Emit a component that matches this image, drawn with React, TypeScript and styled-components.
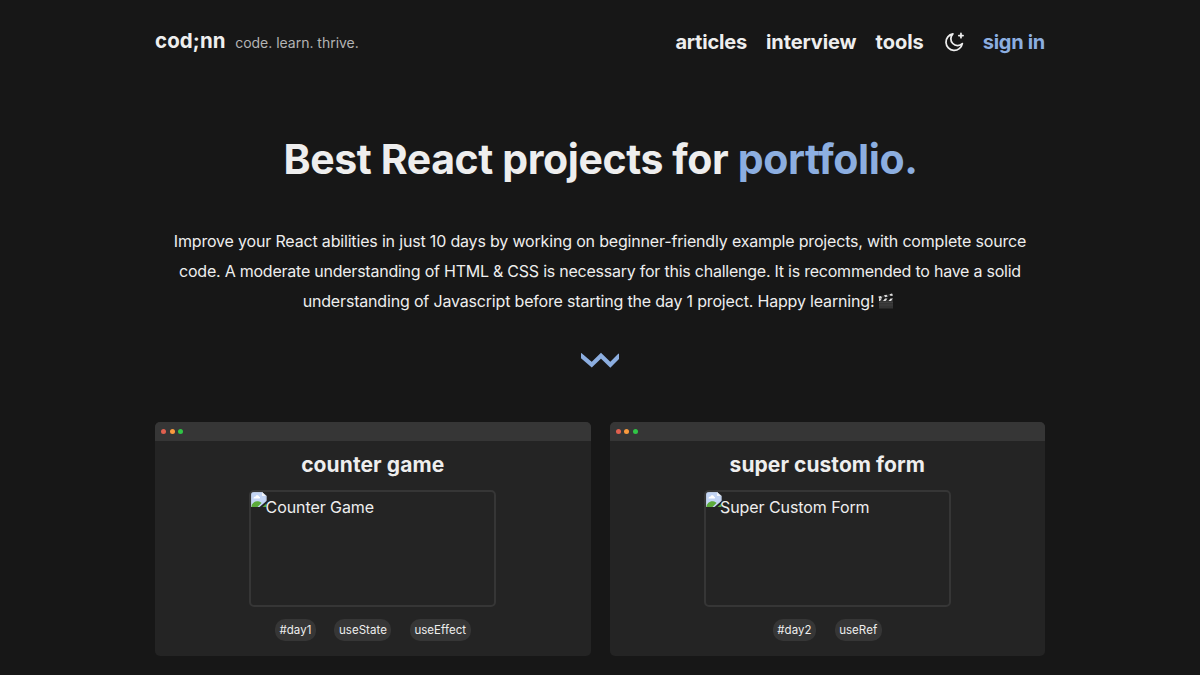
import styled, { createGlobalStyle } from "styled-components";

const GlobalStyle = createGlobalStyle`
  * {
    box-sizing: border-box;
  }
  body {
    margin: 0;
    background-color: #171717;
    color: #eeeeee;
    font-family: Inter, "Liberation Sans", sans-serif;
    font-variant-ligatures: none;
    height: 675px;
    overflow: hidden;
  }
`;

const Page = styled.div`
  width: 890px;
  margin: 0 auto;
`;

const Header = styled.header`
  display: flex;
  justify-content: space-between;
  align-items: center;
  height: 84px;
`;

const Brand = styled.div`
  display: flex;
  align-items: baseline;
  gap: 9.5px;
  padding-bottom: 2px;
`;

const Logo = styled.a`
  font-size: 20.5px;
  font-weight: 700;
  line-height: 26px;
  letter-spacing: 0.1px;
`;

const Slogan = styled.span`
  font-size: 14px;
  line-height: 20px;
  letter-spacing: -0.02px;
  color: #b4b4b4;
`;

const Nav = styled.nav`
  display: flex;
  align-items: center;
  gap: 19px;
`;

const NavLink = styled.a<{ $accent?: boolean; $spacing: number }>`
  font-size: 20px;
  font-weight: 700;
  line-height: 26px;
  letter-spacing: ${({ $spacing }) => $spacing}px;
  color: ${({ $accent }) => ($accent ? "#8caee0" : "#eeeeee")};
  white-space: nowrap;
`;

const ThemeIcon = styled.svg`
  display: block;
  width: 22px;
  height: 22px;
  margin: 0 -1px 0 0;
`;

const Title = styled.h1`
  margin: 47px 0 0;
  padding-left: 1px;
  font-size: 41px;
  font-weight: 700;
  line-height: 56px;
  letter-spacing: -0.4px;
  text-align: center;
  white-space: nowrap;

  span {
    color: #8caee0;
  }
`;

const Description = styled.div`
  margin-top: 39px;
  display: flex;
  flex-direction: column;
  align-items: center;
`;

const Line = styled.span<{ $spacing: number }>`
  font-size: 16px;
  line-height: 30px;
  letter-spacing: ${({ $spacing }) => $spacing}px;
  white-space: nowrap;
`;

const Clapper = styled.svg`
  width: 16px;
  height: 16px;
  margin: 0 3px 0 4px;
  vertical-align: -2px;
`;

const Wave = styled.svg`
  display: block;
  width: 38px;
  height: 16px;
  margin: 36px auto 0;
`;

const Cards = styled.main`
  display: grid;
  grid-template-columns: 1fr 1fr;
  gap: 19px;
  margin-top: 54px;
`;

const Card = styled.article`
  height: 234px;
  border-radius: 5px;
  overflow: hidden;
  background-color: #242424;
`;

const CardBar = styled.div`
  display: flex;
  align-items: center;
  gap: 3.5px;
  height: 19px;
  padding-left: 6px;
  background-color: #363636;
`;

const Dot = styled.i<{ $color: string }>`
  width: 5px;
  height: 5px;
  border-radius: 50%;
  background-color: ${({ $color }) => $color};
`;

const CardTitle = styled.h2<{ $spacing: number }>`
  margin: 10px 0 0;
  font-size: 21px;
  font-weight: 700;
  line-height: 28px;
  letter-spacing: ${({ $spacing }) => $spacing}px;
  text-align: center;
`;

const Preview = styled.div`
  display: flex;
  width: 247.4px;
  height: 117px;
  margin: 11px auto 0;
  border: 2px solid #363636;
  border-radius: 5px;
  overflow: hidden;
`;

const BrokenIcon = styled.svg`
  flex-shrink: 0;
  width: 16px;
  height: 16px;
  margin-right: -1.5px;
`;

const PreviewAlt = styled.span`
  font-size: 16px;
  line-height: 31px;
  letter-spacing: -0.08px;
`;

const Tags = styled.div`
  display: flex;
  justify-content: center;
  gap: 18.5px;
  margin-top: 12px;
`;

const Tag = styled.span`
  height: 22px;
  padding: 0 4.5px;
  border-radius: 10px;
  background-color: #363636;
  font-size: 11.5px;
  line-height: 22px;
  letter-spacing: 0.05px;
`;

const projects = [
  { title: "counter game", spacing: 0.1, alt: "Counter Game", tags: ["#day1", "useState", "useEffect"] },
  { title: "super custom form", spacing: 0.05, alt: "Super Custom Form", tags: ["#day2", "useRef"] },
];

function BrokenImage() {
  return (
    <BrokenIcon viewBox="0 0 16 16">
      <path d="M0 0h11l4.500 4v5L8.500 15H0z" fill="#c3d5f5" />
      <path d="M11 0l4.500 4H11z" fill="#f4f6fa" />
      <path d="M2.500 6.500c0-1.500 1-2 1.900-1.800C5 2.700 7.800 3 8.100 4.800c1.200 0 1.400 1.700.3 1.800z" fill="#fff" />
      <path d="M0 15c1-4 4-6.300 7-5.800 1.800.3 3 1 3.500 1.800L6.500 15z" fill="#5cab3b" />
      <path d="M15.500 11.500V15h-4z" fill="#5cab3b" />
      <path d="M.3 15V.3H11L15.200 4v4.500" fill="none" stroke="#b3bdcc" strokeWidth=".6" />
    </BrokenIcon>
  );
}

function App() {
  return (
    <>
      <GlobalStyle />
      <Page>
        <Header>
          <Brand>
            <Logo>cod;nn</Logo>
            <Slogan>code. learn. thrive.</Slogan>
          </Brand>
          <Nav>
            <NavLink $spacing={-0.2}>articles</NavLink>
            <NavLink $spacing={-0.1}>interview</NavLink>
            <NavLink $spacing={0}>tools</NavLink>
            <ThemeIcon viewBox="0 0 24 24" fill="none" stroke="#eeeeee" strokeWidth="1.9" strokeLinecap="round" strokeLinejoin="round">
              <path d="M17.300 5h4.600M19.600 2.700v4.600" />
              <path d="M10.800 3.200a9 9 0 1 0 10.300 10.600A7.300 7.300 0 0 1 10.800 3.200z" />
            </ThemeIcon>
            <NavLink $accent $spacing={-0.3}>
              sign in
            </NavLink>
          </Nav>
        </Header>
        <Title>
          Best React projects for <span>portfolio.</span>
        </Title>
        <Description>
          <Line $spacing={-0.175}>
            Improve your React abilities in just 10 days by working on beginner-friendly example projects, with complete source
          </Line>
          <Line $spacing={-0.235}>
            code. A moderate understanding of HTML &amp; CSS is necessary for this challenge. It is recommended to have a solid
          </Line>
          <Line $spacing={-0.175}>
            understanding of Javascript before starting the day 1 project. Happy learning!
            <Clapper viewBox="0 0 16 16">
              <path d="M1 7h14v8.500H1z" fill="#343434" />
              <path d="M1 9.500h14M1 12h14" stroke="#484848" strokeWidth=".6" />
              <path d="M.5 3.500L14.500.5l.5 2-14 3z" fill="#333" />
              <path d="M.5 3.500l2.500-.5 1 2-3 .7zM6 2.300l2.500-.5 1.200 1.800-2.500.6zM11.500 1.200l2.500-.6 1 2-2.300.5z" fill="#ddd" />
              <path d="M1 5.500l3 0-2 2.500H1zM7 5.500h2.500L7.500 8H5zM12.500 5.500H15L13 8h-2.500z" fill="#ddd" />
            </Clapper>
          </Line>
        </Description>
        <Wave viewBox="0 0 38 16">
          <path d="M-1 2.500L10.700 12.700 20 3.700l9.300 9L39 3" fill="none" stroke="#8caee0" strokeWidth="4.200" />
        </Wave>
        <Cards>
          {projects.map((project) => (
            <Card key={project.title}>
              <CardBar>
                <Dot $color="#e0604f" />
                <Dot $color="#f99a3e" />
                <Dot $color="#30c546" />
              </CardBar>
              <CardTitle $spacing={project.spacing}>{project.title}</CardTitle>
              <Preview>
                <BrokenImage />
                <PreviewAlt>{project.alt}</PreviewAlt>
              </Preview>
              <Tags>
                {project.tags.map((tag) => (
                  <Tag key={tag}>{tag}</Tag>
                ))}
              </Tags>
            </Card>
          ))}
        </Cards>
      </Page>
    </>
  );
}

export default App;
